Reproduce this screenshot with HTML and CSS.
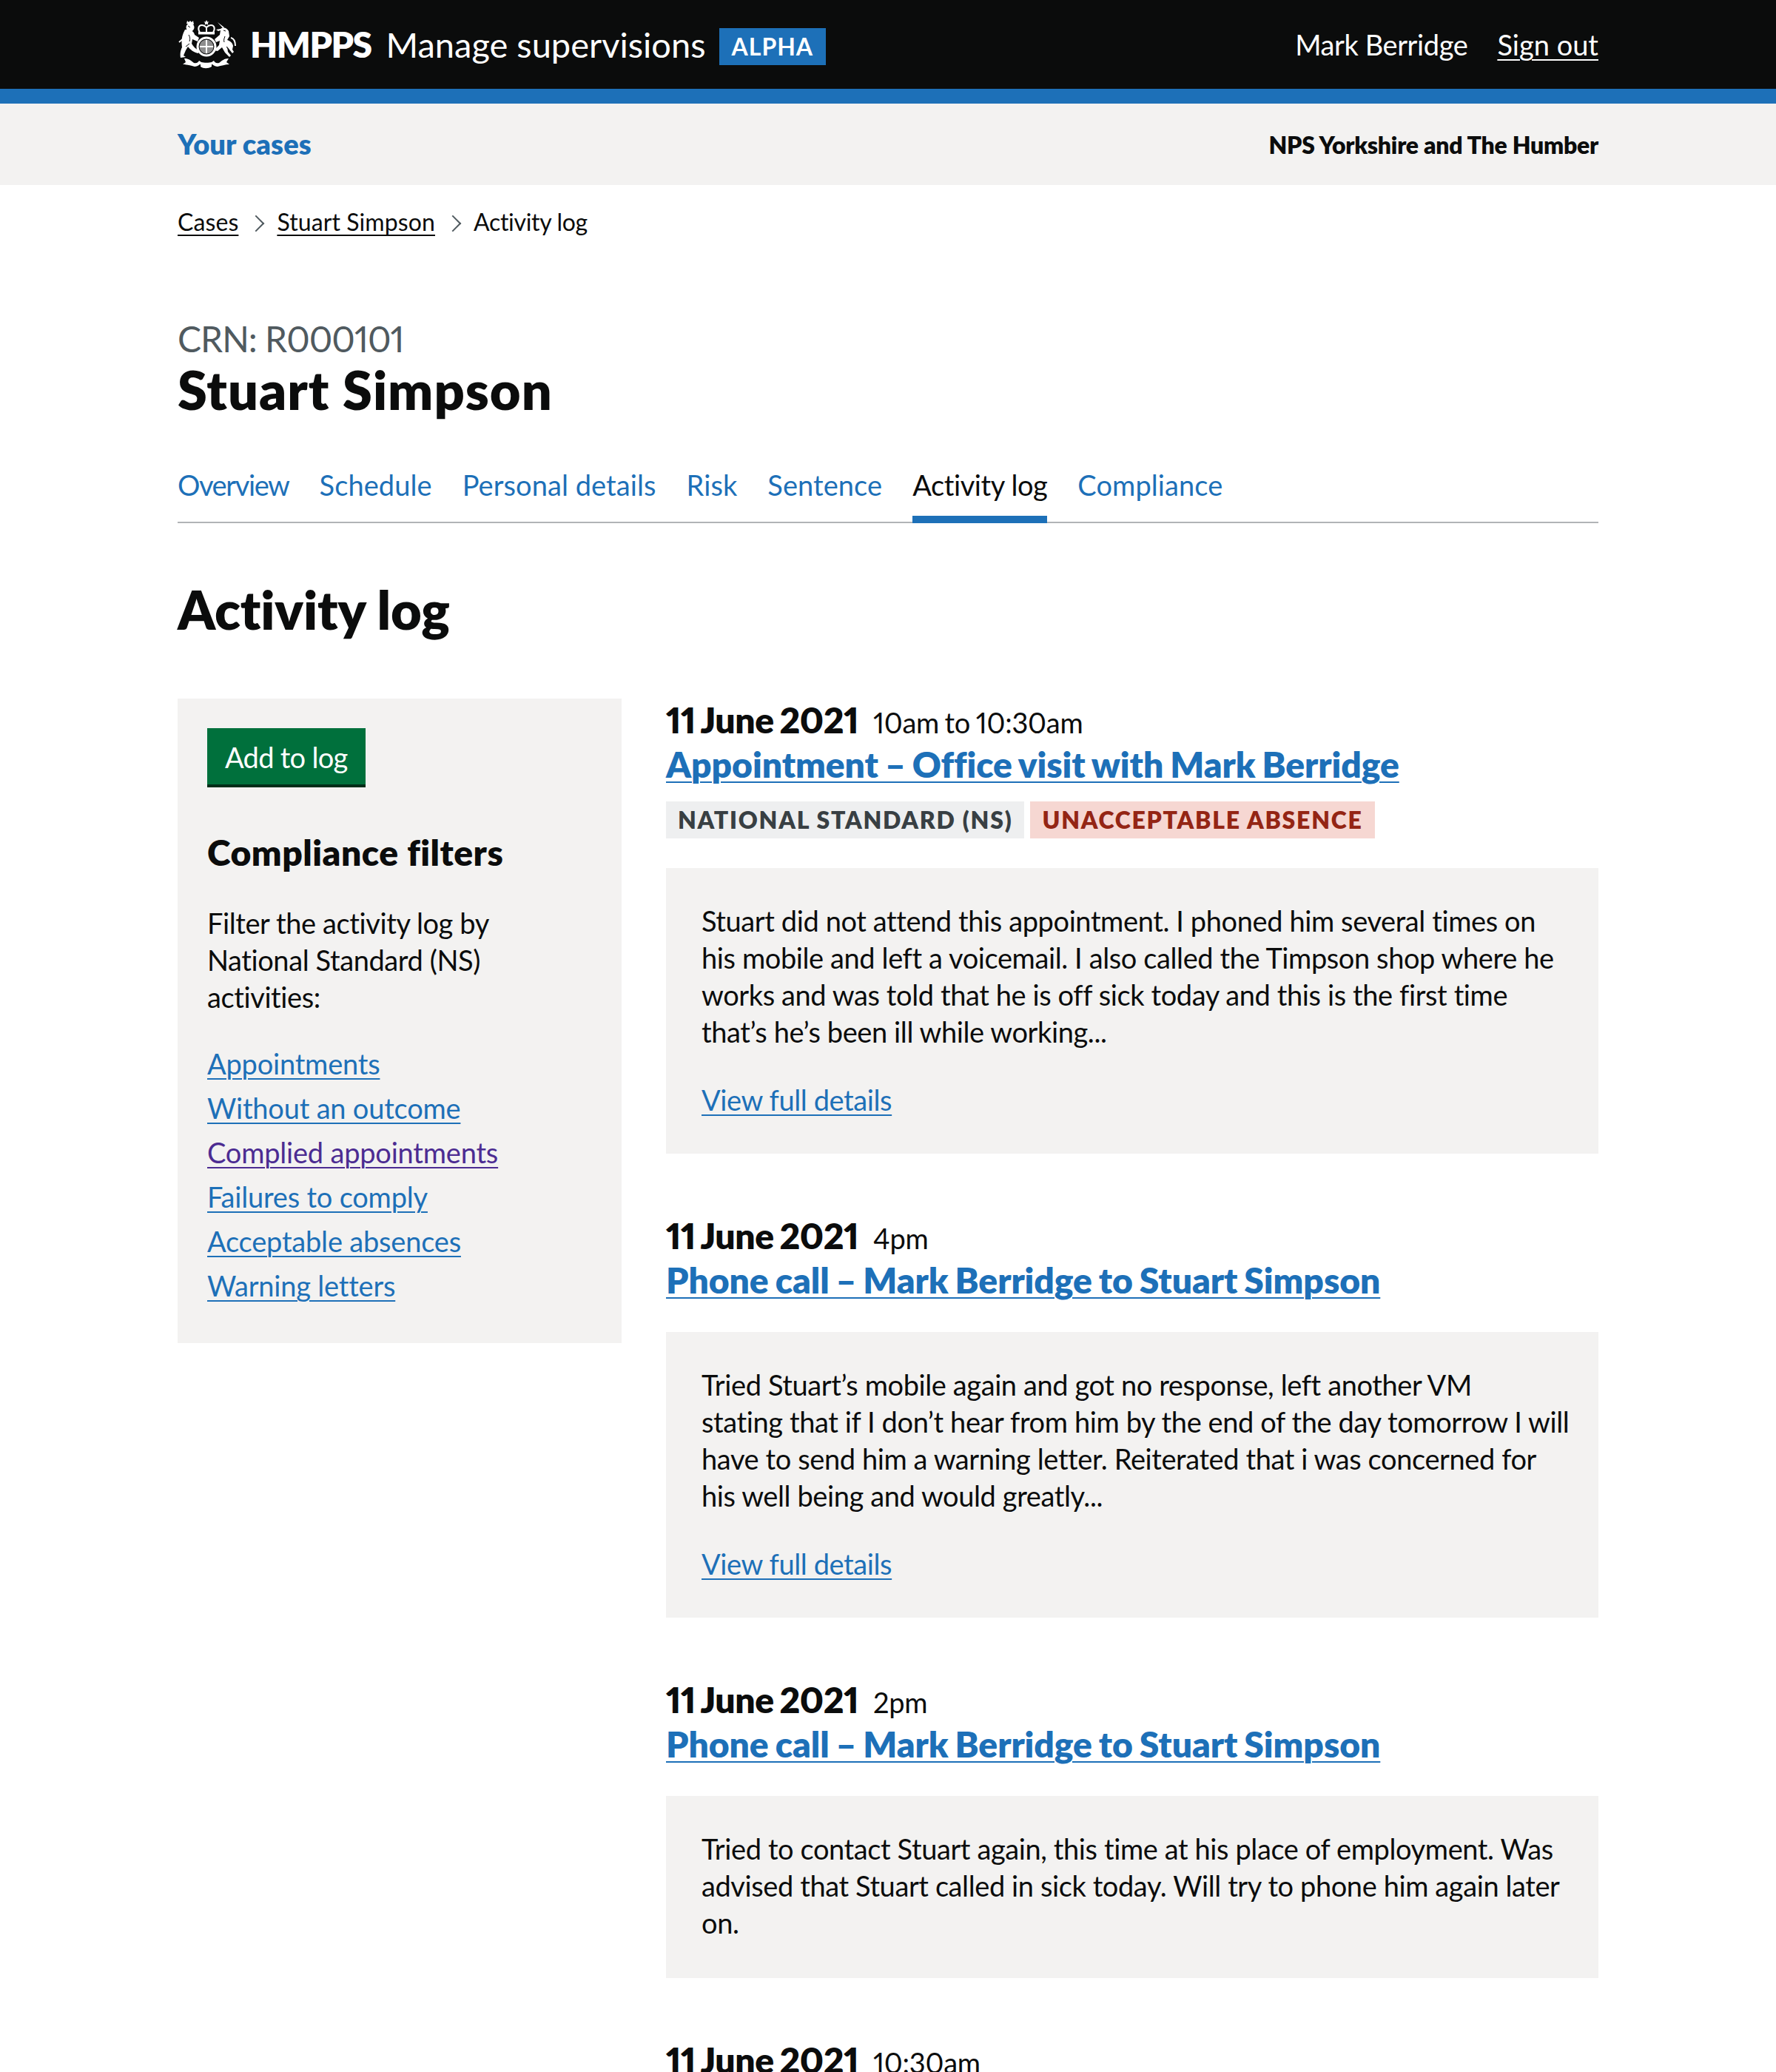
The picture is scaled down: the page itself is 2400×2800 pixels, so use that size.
FILE: index.html
```html
<!DOCTYPE html>
<html lang="en">
<head>
    <meta charset="UTF-8">
    <title>Activity log - Manage supervisions</title>
    <link rel="stylesheet" href="styles.css">
</head>
<body>

<header class="site-header">
    <div class="container header-inner">
        <div class="header-left">
            <svg class="crest" viewBox="0 0 80 66" aria-hidden="true">
                <g fill="#fff">
                    <!-- crown -->
                    <path d="M39 0l1.200 2.400 2.400.2-1.800 1.400.5 2.600-2.300-1.200-2.300 1.200.5-2.600-1.800-1.400 2.400-.2z"/>
                    <path fill="none" stroke="#fff" stroke-width="2" d="M30 17c-3-5-2-10 3-10 3 0 4 1 6 3 2-2 3-3 6-3 5 0 6 5 3 10M39 10v7"/>
                    <path d="M28 16h22v3.500H28z"/>
                    <!-- shield -->
                    <circle cx="39" cy="36" r="9.500" fill="#8d8d8d"/>
                    <path d="M38 27h2v18h-2zM30 35h18v2H30z"/>
                    <circle cx="39" cy="36" r="12" fill="none" stroke="#fff" stroke-width="3"/>
                    <!-- lion -->
                    <circle cx="17" cy="10" r="5.500"/>
                    <path d="M12 5l1-4 2 2 2-2 2 2 2-2 1 5z"/>
                    <path d="M12 13c5 0 10 2 11 7l6 4-2 5-7-3-1 6c2 4 6 7 10 10l-1 3c-6-1-11-5-14-9l-3 5-3 7 3 2-7 1c-1-5 0-10 2-14-1-8-1-15 4-24z"/>
                    <path fill="none" stroke="#fff" stroke-width="2" d="M2 30l6-5c3 3 2 9-2 15"/>
                    <path fill="none" stroke="#0b0c0c" d="M14 8l3 2M15 20c2 3 2 6 1 9M11 36l5-4"/>
                    <!-- unicorn -->
                    <path d="M54 3l9 7-1.500 1.500z"/>
                    <path d="M58 12c4-3 9-1 11 3l1 7-3 5c3 1 7 3 8 8l-1 5 2 3-2 2-4-5-3-4 1 7 4 5-2 2-6-6-4-7-6 5-5-1 7-7 1-6-5 2-2-4 7-6 1-6-3 1-3-2z"/>
                    <path fill="none" stroke="#fff" stroke-width="2" d="M72 24c4 1 6 5 6 11"/>
                    <path fill="none" stroke="#0b0c0c" d="M62 14l3 1M64 22c-1 3-2 5-1 8M66 36l3 4"/>
                    <!-- motto ribbon -->
                    <path d="M9 52c6 0 9 3 13 6 4 1 6-1 7-3l3 2c3 1 11 1 14 0l3-2c1 2 3 4 7 3 4-3 7-6 13-6l-3 5 4 3c-6 0-11 2-16 3-2 0-5-1-7-3h-1v3c-5 3-11 3-15 0v-3h-1c-2 2-5 3-7 3-5-1-10-3-16-3l4-3z"/>
                </g>
            </svg>
            <span class="brand">HMPPS</span>
            <span class="service">Manage supervisions</span>
            <strong class="phase">ALPHA</strong>
        </div>
        <nav class="header-right">
            <span>Mark Berridge</span>
            <a href="#">Sign out</a>
        </nav>
    </div>
</header>

<div class="sub-header">
    <div class="container sub-inner">
        <a href="#" class="sub-link">Your cases</a>
        <span class="sub-team">NPS Yorkshire and The Humber</span>
    </div>
</div>

<div class="container">

    <ol class="breadcrumbs">
        <li><a href="#">Cases</a></li>
        <li><a href="#">Stuart Simpson</a></li>
        <li>Activity log</li>
    </ol>

    <main>
        <span class="caption">CRN: R000101</span>
        <h1 class="name">Stuart Simpson</h1>

        <nav class="tabs">
            <a href="#">Overview</a>
            <a href="#">Schedule</a>
            <a href="#">Personal details</a>
            <a href="#">Risk</a>
            <a href="#">Sentence</a>
            <a href="#" class="current">Activity log</a>
            <a href="#">Compliance</a>
        </nav>

        <h2 class="page-title">Activity log</h2>

        <div class="columns">
            <aside class="sidebar">
                <a href="#" class="button">Add to log</a>
                <h3 class="filters-title">Compliance filters</h3>
                <p class="filters-text">Filter the activity log by National Standard (NS) activities:</p>
                <ul class="filters">
                    <li><a href="#">Appointments</a></li>
                    <li><a href="#">Without an outcome</a></li>
                    <li><a href="#" class="visited">Complied appointments</a></li>
                    <li><a href="#">Failures to comply</a></li>
                    <li><a href="#">Acceptable absences</a></li>
                    <li><a href="#">Warning letters</a></li>
                </ul>
            </aside>

            <section class="log">
                <article class="entry">
                    <h3 class="entry-date">11 June 2021 <span class="entry-time">10am to 10:30am</span></h3>
                    <a href="#" class="entry-title">Appointment – Office visit with Mark Berridge</a>
                    <div class="tags">
                        <span class="tag tag-grey">NATIONAL STANDARD (NS)</span>
                        <span class="tag tag-red">UNACCEPTABLE ABSENCE</span>
                    </div>
                    <div class="note">
                        <p>Stuart did not attend this appointment. I phoned him several times on his mobile and left a voicemail. I also called the Timpson shop where he works and was told that he is off sick today and this is the first time that’s he’s been ill while working...</p>
                        <a href="#">View full details</a>
                    </div>
                </article>

                <article class="entry">
                    <h3 class="entry-date">11 June 2021 <span class="entry-time">4pm</span></h3>
                    <a href="#" class="entry-title">Phone call – Mark Berridge to Stuart Simpson</a>
                    <div class="note">
                        <p>Tried Stuart’s mobile again and got no response, left another VM<br>stating that if I don’t hear from him by the end of the day tomorrow I will<br>have to send him a warning letter. Reiterated that i was concerned for<br>his well being and would greatly...</p>
                        <a href="#">View full details</a>
                    </div>
                </article>

                <article class="entry">
                    <h3 class="entry-date">11 June 2021 <span class="entry-time">2pm</span></h3>
                    <a href="#" class="entry-title">Phone call – Mark Berridge to Stuart Simpson</a>
                    <div class="note">
                        <p class="last">Tried to contact Stuart again, this time at his place of employment. Was advised that Stuart called in sick today. Will try to phone him again later on.</p>
                    </div>
                </article>

                <article class="entry">
                    <h3 class="entry-date">11 June 2021 <span class="entry-time">10:30am</span></h3>
                </article>
            </section>
        </div>
    </main>
</div>

</body>
</html>
```

FILE: styles.css
```css
html, body {
    margin: 0;
    padding: 0;
    height: 2800px;
    overflow: hidden;
}

body {
    font-family: "Lato", "Liberation Sans", sans-serif;
    font-size: 38px;
    line-height: 50px;
    letter-spacing: -.4px;
    font-variant-numeric: proportional-nums;
    color: #0b0c0c;
    background: #fff;
}

a {
    color: #1d70b8;
    text-underline-offset: 5px;
    text-decoration-thickness: 2px;
}

.container {
    width: 1920px;
    margin: 0 auto;
}

/* header */
.site-header {
    height: 120px;
    background: #0b0c0c;
    border-bottom: 20px solid #1d70b8;
    color: #fff;
}

.header-inner {
    display: flex;
    justify-content: space-between;
    align-items: center;
    height: 120px;
}

.header-left {
    display: flex;
    align-items: center;
}

.crest {
    width: 80px;
    height: 66px;
    margin-right: 18px;
}

.brand {
    font-size: 48px;
    font-weight: 800;
    letter-spacing: -1.500px;
    margin-right: 20px;
}

.service {
    font-size: 47px;
    letter-spacing: 0;
    margin-right: 18px;
}

.phase {
    margin-top: 6px;
    padding: 0 17px;
    background: #1d70b8;
    font-size: 32px;
    line-height: 50px;
    letter-spacing: 1px;
}

.header-right {
    display: flex;
    gap: 40px;
    letter-spacing: -.4px;
}

.header-right a {
    color: #fff;
    letter-spacing: 0;
}

/* sub header */
.sub-header {
    height: 110px;
    background: #f3f2f1;
}

.sub-inner {
    display: flex;
    justify-content: space-between;
    align-items: center;
    height: 110px;
}

.sub-link {
    margin-top: -2px;
    font-weight: 800;
    letter-spacing: .1px;
    text-decoration: none;
}

.sub-team {
    margin-top: 2px;
    font-size: 32px;
    font-weight: 800;
    letter-spacing: -.25px;
}

/* breadcrumbs */
.breadcrumbs {
    display: flex;
    list-style: none;
    margin: 0;
    padding: 25px 0 0;
    font-size: 32px;
    line-height: 50px;
    letter-spacing: .1px;
}

.breadcrumbs a {
    color: #0b0c0c;
}

.breadcrumbs li:last-child {
    letter-spacing: -.3px;
}

.breadcrumbs li + li::before {
    content: "";
    display: inline-block;
    width: 14px;
    height: 14px;
    margin: 0 20px 2px 16px;
    border-top: 2px solid #505a5f;
    border-right: 2px solid #505a5f;
    transform: rotate(45deg);
}

/* title */
.caption {
    display: block;
    margin-top: 104px;
    font-size: 48px;
    line-height: 57px;
    letter-spacing: -1px;
    color: #505a5f;
}

.name {
    margin: 0;
    font-size: 72px;
    line-height: 80px;
    font-weight: 800;
    letter-spacing: 1px;
}

/* tabs */
.tabs {
    display: flex;
    gap: 41px;
    margin-top: 50px;
    border-bottom: 2px solid #b1b4b6;
    letter-spacing: .08px;
}

.tabs a {
    padding: 14px 0 17px;
    text-decoration: none;
}

.tabs a:first-child {
    letter-spacing: -1.400px;
}

.tabs .current {
    margin-bottom: -2px;
    border-bottom: 10px solid #1d70b8;
    color: #0b0c0c;
    letter-spacing: -.4px;
}

.page-title {
    margin: 76px 0 81px;
    font-size: 72px;
    line-height: 80px;
    font-weight: 800;
    letter-spacing: -.2px;
}

/* columns */
.columns {
    display: grid;
    grid-template-columns: 600px 1260px;
    gap: 60px;
    align-items: start;
}

.sidebar {
    padding: 40px 40px 48px;
    background: #f3f2f1;
}

.button {
    display: inline-block;
    padding: 14px 24px 12px;
    background: #00703c;
    color: #fff;
    letter-spacing: -.7px;
    text-decoration: none;
    box-shadow: 0 4px 0 #002d18;
}

.filters-title {
    margin: 62px 0 40px;
    font-size: 48px;
    line-height: 60px;
    font-weight: 800;
    letter-spacing: .5px;
}

.filters-text {
    margin: 0 0 35px;
}

.filters {
    list-style: none;
    margin: 0;
    padding: 0;
    letter-spacing: -.2px;
}

.filters li {
    line-height: 60px;
}

.filters .visited {
    color: #4c2c92;
}

/* log entries */
.entry {
    margin-bottom: 82px;
}

.entry-date {
    margin: 0;
    font-size: 48px;
    line-height: 58px;
    font-weight: 800;
    letter-spacing: -.4px;
    word-spacing: -3px;
}

.entry-time {
    margin-left: 12px;
    font-size: 38px;
    font-weight: 400;
    letter-spacing: -.25px;
    word-spacing: -2px;
}

.entry-title {
    display: block;
    margin-top: -2px;
    font-size: 48px;
    line-height: 60px;
    font-weight: 800;
    letter-spacing: -.07px;
    word-spacing: -2px;
}

.tags {
    display: flex;
    gap: 8px;
    margin-top: 20px;
}

.tag {
    padding: 0 16px;
    font-size: 32px;
    line-height: 50px;
    font-weight: 800;
    letter-spacing: 1.750px;
}

.tag-grey {
    background: #eeeff0;
    color: #383f43;
}

.tag-red {
    background: #f6d7d2;
    color: #942514;
}

.note {
    margin-top: 40px;
    padding: 46px 36px 48px 48px;
    background: #f3f2f1;
}

.note p {
    margin: 0 0 42px;
}

.note p.last {
    margin: 0 0 2px;
}
```
